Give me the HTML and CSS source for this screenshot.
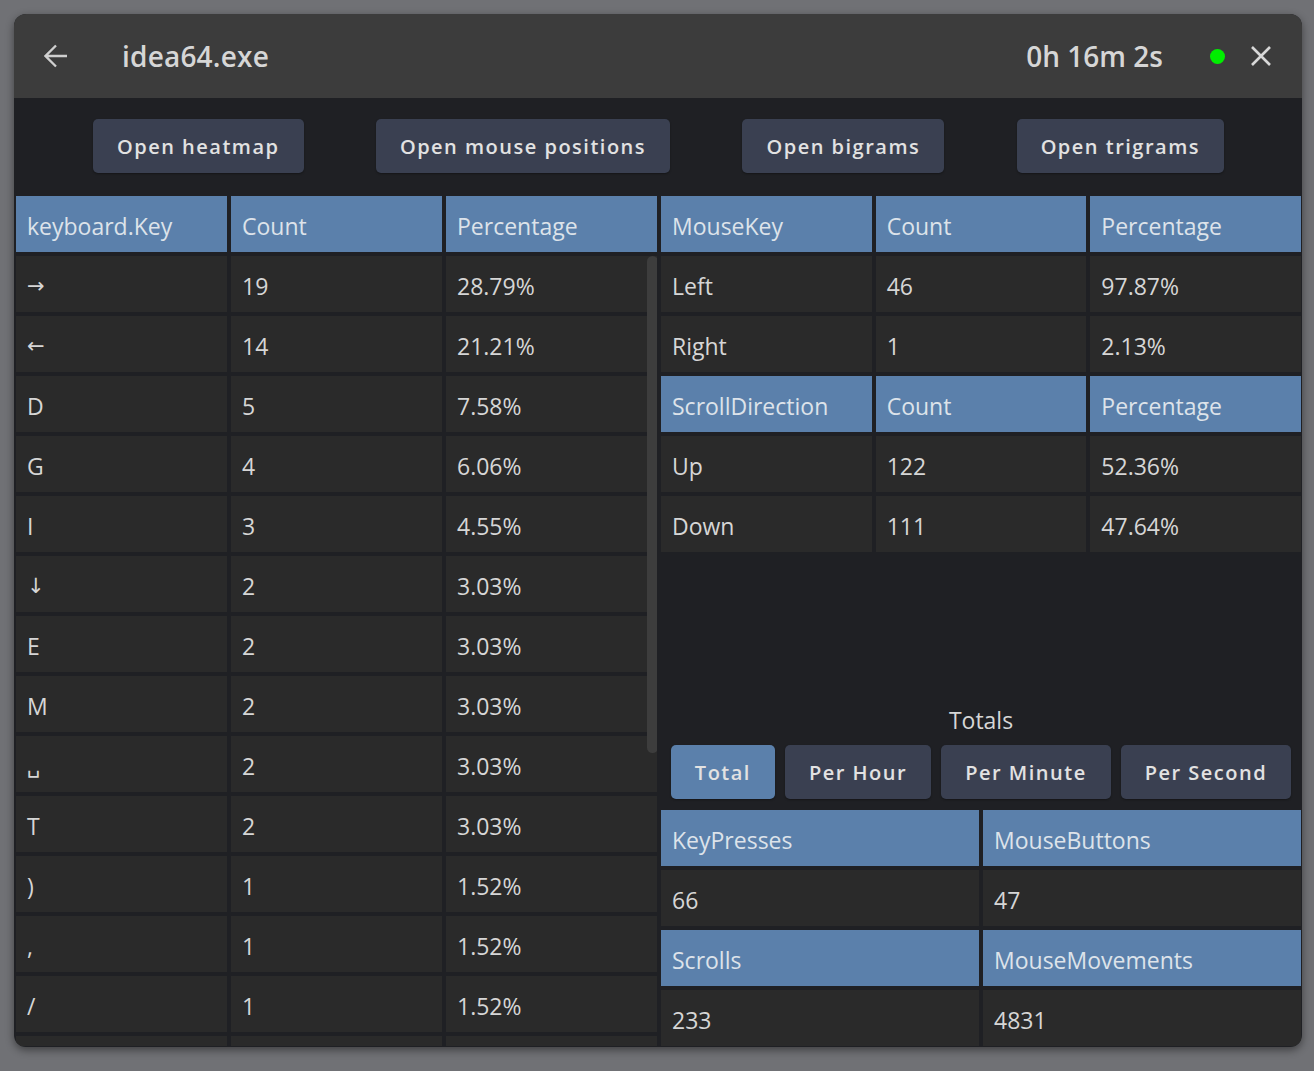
FILE: index.html
```html
<!DOCTYPE html>
<html>
<head>
<meta charset="utf-8">
<title>idea64.exe</title>
<link rel="stylesheet" href="styles.css">
</head>
<body>
<div class="window">
  <header class="titlebar">
    <svg class="back" width="24" height="24" viewBox="0 0 24 24"><path d="M23 12H1.5M12 1.5L1.5 12L12 22.5" fill="none" stroke="#cfcfcf" stroke-width="2.3"/></svg>
    <div class="title">idea64.exe</div>
    <div class="spacer"></div>
    <div class="timer">0h 16m 2s</div>
    <div class="dot"></div>
    <svg class="close" width="20" height="20" viewBox="0 0 20 20"><path d="M1 1L19 19M19 1L1 19" fill="none" stroke="#d8d8d8" stroke-width="2.6"/></svg>
  </header>
  <div class="body">
    <div class="toolbar">
      <button class="btn">Open heatmap</button>
      <button class="btn">Open mouse positions</button>
      <button class="btn">Open bigrams</button>
      <button class="btn">Open trigrams</button>
    </div>
    <div class="main">
      <div class="left">
        <div class="grid3">
          <div class="th">keyboard.Key</div><div class="th">Count</div><div class="th">Percentage</div>
          <div class="td sym">→</div><div class="td">19</div><div class="td">28.79%</div>
          <div class="td sym">←</div><div class="td">14</div><div class="td">21.21%</div>
          <div class="td">D</div><div class="td">5</div><div class="td">7.58%</div>
          <div class="td">G</div><div class="td">4</div><div class="td">6.06%</div>
          <div class="td">I</div><div class="td">3</div><div class="td">4.55%</div>
          <div class="td sym">↓</div><div class="td">2</div><div class="td">3.03%</div>
          <div class="td">E</div><div class="td">2</div><div class="td">3.03%</div>
          <div class="td">M</div><div class="td">2</div><div class="td">3.03%</div>
          <div class="td sym">␣</div><div class="td">2</div><div class="td">3.03%</div>
          <div class="td">T</div><div class="td">2</div><div class="td">3.03%</div>
          <div class="td">)</div><div class="td">1</div><div class="td">1.52%</div>
          <div class="td">,</div><div class="td">1</div><div class="td">1.52%</div>
          <div class="td">/</div><div class="td">1</div><div class="td">1.52%</div>
          <div class="td"></div><div class="td"></div><div class="td"></div>
        </div>
        <div class="thumb"></div>
      </div>
      <div class="right">
        <div class="grid3 rgrid">
          <div class="th">MouseKey</div><div class="th">Count</div><div class="th">Percentage</div>
          <div class="td">Left</div><div class="td">46</div><div class="td">97.87%</div>
          <div class="td">Right</div><div class="td">1</div><div class="td">2.13%</div>
          <div class="th">ScrollDirection</div><div class="th">Count</div><div class="th">Percentage</div>
          <div class="td">Up</div><div class="td">122</div><div class="td">52.36%</div>
          <div class="td">Down</div><div class="td">111</div><div class="td">47.64%</div>
        </div>
        <div class="totals">
          <div class="totals-label">Totals</div>
          <div class="tabs">
            <button class="btn tab active">Total</button>
            <button class="btn tab">Per Hour</button>
            <button class="btn tab">Per Minute</button>
            <button class="btn tab">Per Second</button>
          </div>
          <div class="grid2">
            <div class="th">KeyPresses</div><div class="th">MouseButtons</div>
            <div class="td">66</div><div class="td">47</div>
            <div class="th">Scrolls</div><div class="th">MouseMovements</div>
            <div class="td">233</div><div class="td">4831</div>
          </div>
        </div>
      </div>
    </div>
  </div>
</div>
</body>
</html>
```
FILE: styles.css
```css
* { box-sizing: border-box; }

html, body {
  margin: 0;
  padding: 0;
}

body {
  background: #707175;
  font-family: "Open Sans", "Noto Sans", sans-serif;
  width: 1314px;
  height: 1071px;
  overflow: hidden;
}

.window {
  margin: 14px 0 0 14px;
  width: 1288px;
  height: 1033px;
  border-radius: 12px;
  overflow: hidden;
  background: #1f2024;
  display: flex;
  flex-direction: column;
  box-shadow: 0 3px 8px rgba(0, 0, 0, 0.45);
}

.titlebar {
  height: 84px;
  flex: none;
  background: #3c3c3c;
  display: flex;
  align-items: center;
  padding: 0 31px 0 30px;
}

.back { display: block; flex: none; }

.title {
  margin-left: 54px;
  font-size: 28px;
  font-weight: 600;
  color: #d6d6d6;
  letter-spacing: 0.2px;
}

.spacer { flex: 1; }

.timer {
  font-size: 28px;
  font-weight: 600;
  color: #d6d6d6;
}

.dot {
  width: 15px;
  height: 15px;
  border-radius: 50%;
  background: #00ee00;
  margin-left: 47px;
}

.close { display: block; margin-left: 26px; flex: none; }

.body {
  flex: 1;
  min-height: 0;
  display: flex;
  flex-direction: column;
  padding: 0 1px 1px 2px;
}

.toolbar {
  flex: none;
  display: flex;
  justify-content: space-between;
  padding: 21px 77px 23px 77px;
}

.btn {
  height: 54px;
  padding: 0 24px;
  border: none;
  border-radius: 5px;
  background: #3a4051;
  color: #e2e2e2;
  font-family: "Open Sans", "Noto Sans", sans-serif;
  font-size: 20px;
  font-weight: 600;
  letter-spacing: 1.5px;
  box-shadow: 0 1px 2px rgba(0, 0, 0, 0.35);
}

.main {
  flex: 1;
  min-height: 0;
  display: flex;
  gap: 4px;
}

.left {
  width: 641px;
  flex: none;
  position: relative;
  overflow: hidden;
}

.grid3 {
  display: grid;
  grid-template-columns: repeat(3, 1fr);
  grid-auto-rows: 56px;
  gap: 4px;
}

.th, .td {
  display: flex;
  align-items: center;
  padding: 4px 10px 0 11px;
  font-size: 23px;
  white-space: nowrap;
  overflow: hidden;
}

.th {
  background: #5b80ab;
  color: #dde3ea;
}

.td {
  background: #2a2a2a;
  color: #d6d6d6;
}

.td.sym {
  font-family: "DejaVu Sans", sans-serif;
  font-size: 21px;
}

.thumb {
  position: absolute;
  left: 631px;
  top: 60px;
  width: 11px;
  height: 497px;
  border-radius: 6px;
  background: #3d3d3d;
}

.right {
  flex: 1;
  min-width: 0;
  display: flex;
  flex-direction: column;
}

.totals {
  margin-top: auto;
  display: flex;
  flex-direction: column;
}

.totals-label {
  height: 30px;
  line-height: 30px;
  text-align: center;
  font-size: 23px;
  color: #d6d6d6;
}

.tabs {
  margin-top: 10px;
  display: flex;
  justify-content: center;
  gap: 10px;
}

.tab { padding: 0 24px; }

.tab.active { background: #5b80ab; }

.grid2 {
  margin-top: 11px;
  display: grid;
  grid-template-columns: repeat(2, 1fr);
  grid-auto-rows: 56px;
  gap: 4px;
}
```
